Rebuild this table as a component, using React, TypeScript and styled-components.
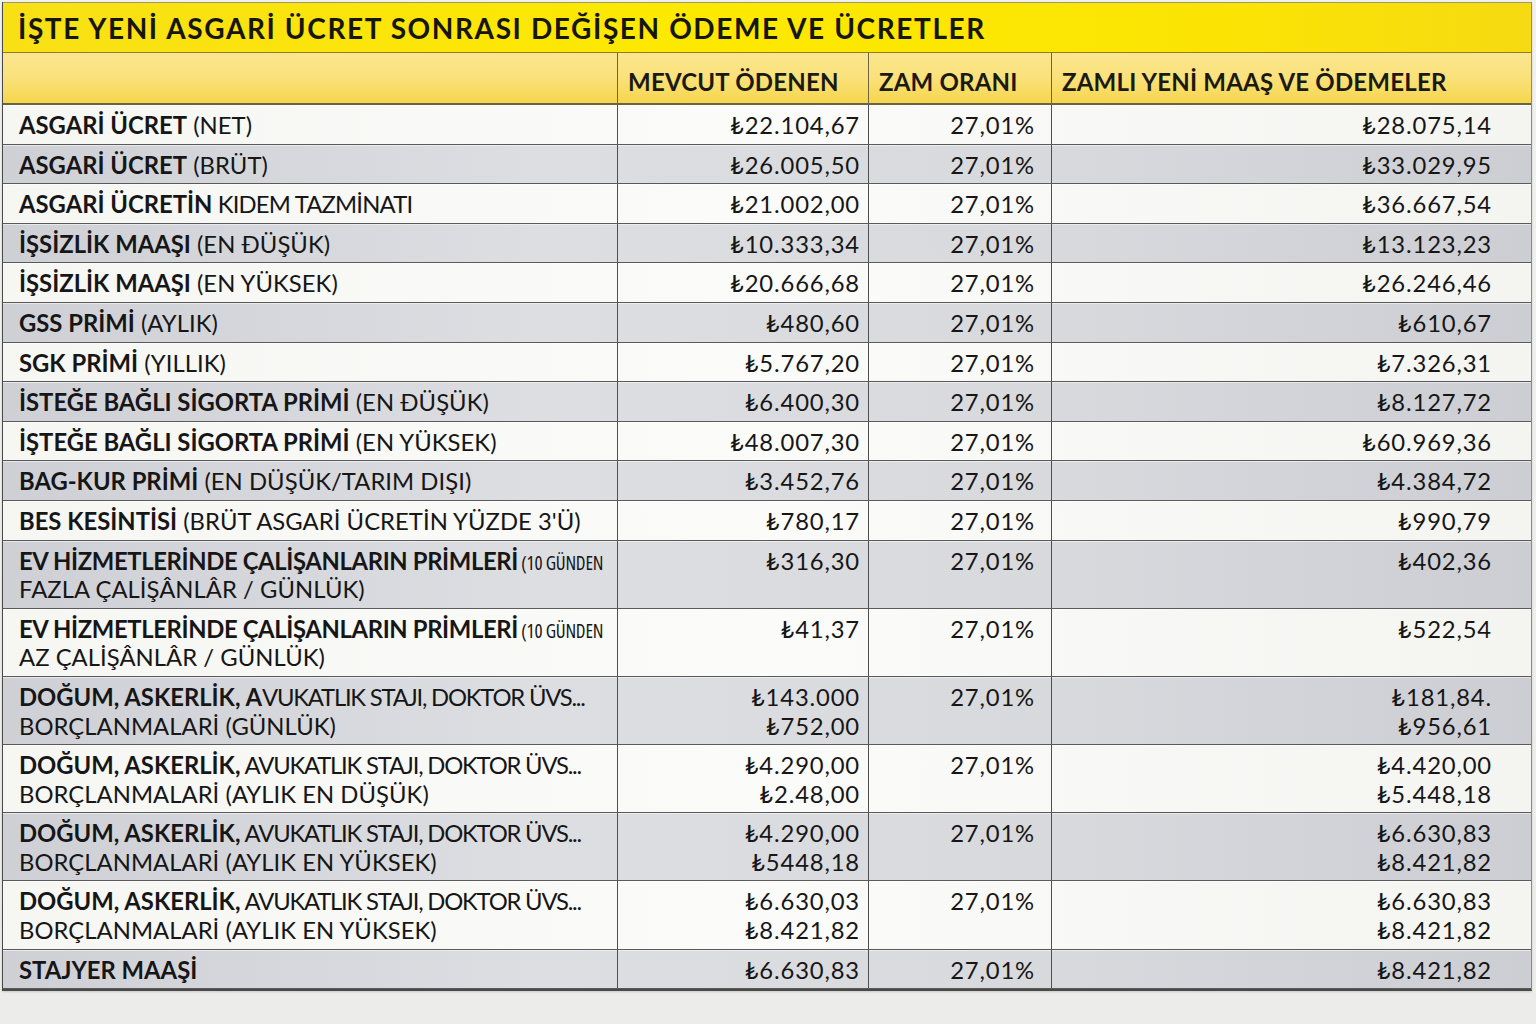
import React from "react";
import styled, { createGlobalStyle } from "styled-components";

const Global = createGlobalStyle`
  html, body { margin: 0; padding: 0; background: #efefed; }
  body { font-family: Lato, "Open Sans", "Noto Sans", "DejaVu Sans", sans-serif; color: #161616; }
`;

const COLS = "615px 251px 183px 481px";

const Page = styled.div`
  width: 1536px;
  height: 1024px;
  padding: 2px 0 0 2px;
  box-sizing: border-box;
  background: linear-gradient(180deg, #f1f1ef 0%, #ececea 100%);
`;

const Table = styled.div`
  width: 1530px;
  border-left: 1px solid #4a4a4a;
  border-right: 1px solid #8a8a8a;
  border-bottom: 2px solid #4a4a4a;
  box-sizing: border-box;
  box-shadow: 0 1px 2px rgba(0, 0, 0, 0.15);
`;

const Title = styled.h1`
  margin: 0;
  height: 51px;
  box-sizing: border-box;
  border-top: 1px solid #a09a6a;
  border-bottom: 1px solid #8c7d2a;
  padding: 7px 0 0 15px;
  font-size: 28px;
  font-weight: 700;
  letter-spacing: 1.6px;
  line-height: 36px;
  color: #16160f;
  white-space: nowrap;
  background: linear-gradient(90deg, #f8e016 0%, #fde900 45%, #fbe404 80%, #f6da12 100%);
`;

const Row = styled.div<{ $tone: "head" | "light" | "dark" }>`
  display: grid;
  grid-template-columns: ${COLS};
  border-bottom: ${(p) => (p.$tone === "head" ? "2px solid #6a6248" : "1px solid #5a5a5a")};
  background: ${(p) =>
    p.$tone === "head"
      ? "linear-gradient(180deg, #fbe68e 0%, #fae17a 50%, #f6d64c 100%)"
      : p.$tone === "dark"
      ? "linear-gradient(90deg, #cfd0d5 0%, #dddee2 35%, #d8d9dd 70%, #ccced3 100%)"
      : "linear-gradient(90deg, #f6f6f3 0%, #fbfbf9 50%, #f4f4f1 100%)"};
  box-shadow: ${(p) => (p.$tone === "head" ? "none" : "inset 0 1px 0 rgba(255,255,255,0.5)")};
`;

const Cell = styled.div<{ $align?: "left" | "right"; $pr?: number }>`
  box-sizing: border-box;
  border-right: 1px solid #4f4f4f;
  padding: 6px ${(p) => p.$pr ?? 8}px 4px ${(p) => (p.$align === "right" ? 8 : 16)}px;
  text-align: ${(p) => p.$align ?? "left"};
  line-height: 28.6px;
  &:last-child { border-right: none; }
`;

const HeadCell = styled.div`
  box-sizing: border-box;
  border-right: 1px solid #6e6440;
  padding: 12px 0 0 10px;
  height: 50px;
  font-size: 24px;
  font-weight: 700;
  letter-spacing: 0.2px;
  line-height: 34px;
  color: #1b1a12;
  white-space: nowrap;
  &:last-child { border-right: none; }
`;

const Label = styled.div`
  font-size: 23.8px;
  letter-spacing: 0.05px;
  white-space: nowrap;
`;

const Strong = styled.span<{ $squeeze?: boolean }>`
  font-weight: 700;
  letter-spacing: ${(p) => (p.$squeeze ? "-0.35px" : "0")};
`;

const Tight = styled.span<{ $amount?: number }>`
  letter-spacing: ${(p) => p.$amount ?? -0.8}px;
`;

const Small = styled.span`
  font-family: "Open Sans", "Noto Sans", sans-serif;
  font-size: 19px;
  font-stretch: condensed;
  letter-spacing: -0.2px;
  line-height: 20px;
`;

const Num = styled.div`
  font-size: 23.8px;
  letter-spacing: 0.85px;
  white-space: nowrap;
`;

type Data = {
  b: string;
  r?: React.ReactNode;
  small?: string;
  line2?: string;
  cur: string[];
  next: string[];
};

const UVS = "VUKATLIK STAJI, DOKTOR ÜVS...";

const rows: Data[] = [
  { b: "ASGARİ ÜCRET", r: " (NET)", cur: ["₺22.104,67"], next: ["₺28.075,14"] },
  { b: "ASGARİ ÜCRET", r: " (BRÜT)", cur: ["₺26.005,50"], next: ["₺33.029,95"] },
  { b: "ASGARİ ÜCRETİN", r: <Tight> KIDEM TAZMİNATI</Tight>, cur: ["₺21.002,00"], next: ["₺36.667,54"] },
  { b: "İŞSİZLİK MAAŞI", r: " (EN ĐÜŞÜK)", cur: ["₺10.333,34"], next: ["₺13.123,23"] },
  { b: "İŞSİZLİK MAAŞI", r: " (EN YÜKSEK)", cur: ["₺20.666,68"], next: ["₺26.246,46"] },
  { b: "GSS PRİMİ", r: " (AYLIK)", cur: ["₺480,60"], next: ["₺610,67"] },
  { b: "SGK PRİMİ", r: " (YILLIK)", cur: ["₺5.767,20"], next: ["₺7.326,31"] },
  { b: "İSTEĞE BAĞLI SİGORTA PRİMİ", r: " (EN ĐÜŞÜK)", cur: ["₺6.400,30"], next: ["₺8.127,72"] },
  { b: "İŞTEĞE BAĞLI SİGORTA PRİMİ", r: " (EN YÜKSEK)", cur: ["₺48.007,30"], next: ["₺60.969,36"] },
  { b: "BAG-KUR PRİMİ", r: " (EN DÜŞÜK/TARIM DIŞI)", cur: ["₺3.452,76"], next: ["₺4.384,72"] },
  { b: "BES KESİNTİSİ", r: " (BRÜT ASGARİ ÜCRETİN YÜZDE 3'Ü)", cur: ["₺780,17"], next: ["₺990,79"] },
  {
    b: "EV HİZMETLERİNDE ÇALİŞANLARIN PRİMLERİ",
    small: " (10 GÜNDEN",
    line2: "FAZLA ÇALİŞÂNLÂR / GÜNLÜK)",
    cur: ["₺316,30"],
    next: ["₺402,36"],
  },
  {
    b: "EV HİZMETLERİNDE ÇALİŞANLARIN PRİMLERİ",
    small: " (10 GÜNDEN",
    line2: "AZ ÇALİŞÂNLÂR / GÜNLÜK)",
    cur: ["₺41,37"],
    next: ["₺522,54"],
  },
  {
    b: "DOĞUM, ASKERLİK, A",
    r: <Tight $amount={-1.2}>{UVS}</Tight>,
    line2: "BORÇLANMALARİ (GÜNLÜK)",
    cur: ["₺143.000", "₺752,00"],
    next: ["₺181,84.", "₺956,61"],
  },
  {
    b: "DOĞUM, ASKERLİK,",
    r: <Tight $amount={-1.2}>{" A" + UVS}</Tight>,
    line2: "BORÇLANMALARİ (AYLIK EN DÜŞÜK)",
    cur: ["₺4.290,00", "₺2.48,00"],
    next: ["₺4.420,00", "₺5.448,18"],
  },
  {
    b: "DOĞUM, ASKERLİK,",
    r: <Tight $amount={-1.2}>{" A" + UVS}</Tight>,
    line2: "BORÇLANMALARİ (AYLIK EN YÜKSEK)",
    cur: ["₺4.290,00", "₺5448,18"],
    next: ["₺6.630,83", "₺8.421,82"],
  },
  {
    b: "DOĞUM, ASKERLİK,",
    r: <Tight $amount={-1.2}>{" A" + UVS}</Tight>,
    line2: "BORÇLANMALARİ (AYLIK EN YÜKSEK)",
    cur: ["₺6.630,03", "₺8.421,82"],
    next: ["₺6.630,83", "₺8.421,82"],
  },
  { b: "STAJYER MAAŞİ", cur: ["₺6.630,83"], next: ["₺8.421,82"] },
];

export default function App() {
  return (
    <Page>
      <Global />
      <Table>
        <Title>İŞTE YENİ ASGARİ ÜCRET SONRASI DEĞİŞEN ÖDEME VE ÜCRETLER</Title>
        <Row $tone="head">
          <HeadCell />
          <HeadCell>MEVCUT ÖDENEN</HeadCell>
          <HeadCell>ZAM ORANI</HeadCell>
          <HeadCell>ZAMLI YENİ MAAŞ VE ÖDEMELER</HeadCell>
        </Row>
        {rows.map((row, i) => (
          <Row key={i} $tone={i % 2 === 0 ? "light" : "dark"}>
            <Cell>
              <Label>
                <Strong $squeeze={!!row.small}>{row.b}</Strong>
                {row.r}
                {row.small && <Small>{row.small}</Small>}
              </Label>
              {row.line2 && <Label>{row.line2}</Label>}
            </Cell>
            <Cell $align="right" $pr={8}>
              {row.cur.map((v, j) => (
                <Num key={j}>{v}</Num>
              ))}
            </Cell>
            <Cell $align="right" $pr={16}>
              <Num>27,01%</Num>
            </Cell>
            <Cell $align="right" $pr={41}>
              {row.next.map((v, j) => (
                <Num key={j}>{v}</Num>
              ))}
            </Cell>
          </Row>
        ))}
      </Table>
    </Page>
  );
}
